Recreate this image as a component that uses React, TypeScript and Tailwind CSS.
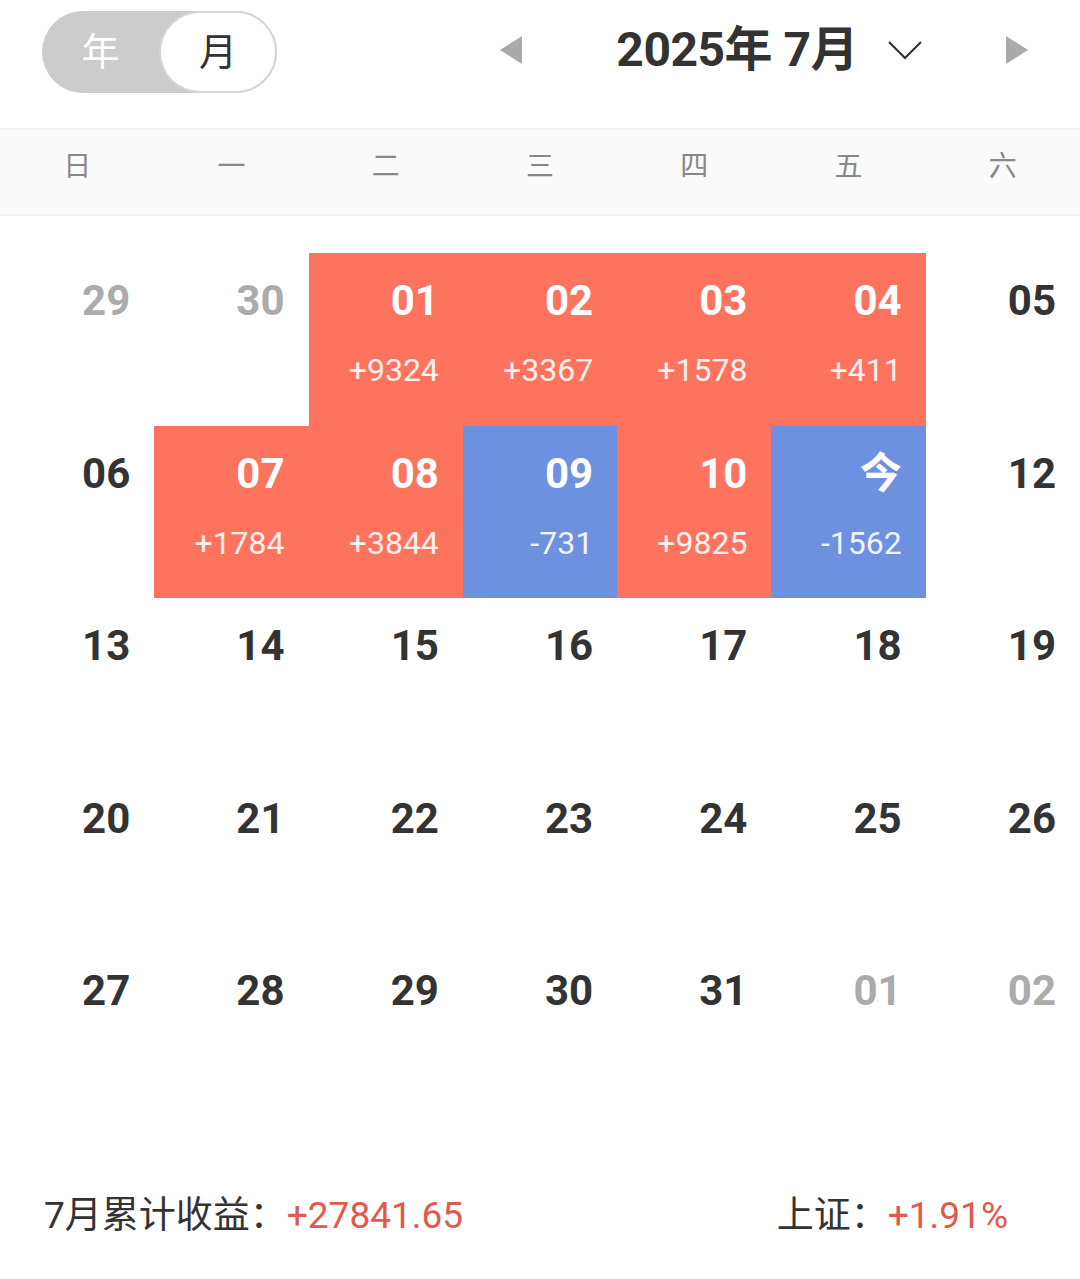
import React from "react";

// Monthly P&L calendar: toggle + month switcher, weekday header,
// grid of days (red = gain, blue = loss), and a summary footer.

type Day = {
  label: string;
  muted?: boolean;
  amount?: string;
  tone?: "up" | "down";
};

const WEEKDAYS = ["日", "一", "二", "三", "四", "五", "六"];

const DAYS: Day[] = [
  { label: "29", muted: true },
  { label: "30", muted: true },
  { label: "01", amount: "+9324", tone: "up" },
  { label: "02", amount: "+3367", tone: "up" },
  { label: "03", amount: "+1578", tone: "up" },
  { label: "04", amount: "+411", tone: "up" },
  { label: "05" },
  { label: "06" },
  { label: "07", amount: "+1784", tone: "up" },
  { label: "08", amount: "+3844", tone: "up" },
  { label: "09", amount: "-731", tone: "down" },
  { label: "10", amount: "+9825", tone: "up" },
  { label: "今", amount: "-1562", tone: "down" },
  { label: "12" },
  ...["13", "14", "15", "16", "17", "18", "19"].map((label) => ({ label })),
  ...["20", "21", "22", "23", "24", "25", "26"].map((label) => ({ label })),
  ...["27", "28", "29", "30", "31"].map((label) => ({ label })),
  { label: "01", muted: true },
  { label: "02", muted: true },
];

const FONT = "font-['Roboto','Noto_Sans_CJK_SC',sans-serif]";

function DayCell({ day }: { day: Day }) {
  const bg =
    day.tone === "up"
      ? "bg-[#fe735e]"
      : day.tone === "down"
        ? "bg-[#6e90e1]"
        : "bg-white";
  const numColor = day.tone
    ? "text-white"
    : day.muted
      ? "text-[#ababab]"
      : "text-[#333333]";

  return (
    <div className={`${bg} flex flex-col items-end pr-[24px] pt-[27px]`}>
      <span className={`text-[42px] leading-none font-bold ${numColor}`}>
        {day.label}
      </span>
      {day.amount && (
        <span className="mt-[32px] text-[32px] leading-none text-white/90">
          {day.amount}
        </span>
      )}
    </div>
  );
}

export default function App() {
  return (
    <div className={`w-[1080px] h-[1279px] bg-white ${FONT}`}>
      {/* Header */}
      <div className="h-[128px] flex items-start pt-[11px] pl-[42px] pr-[52px]">
        <div className="w-[235px] h-[82px] rounded-full bg-[#cccccc] flex items-center">
          <div className="flex-1 text-center text-[38px] text-white leading-none">
            年
          </div>
          <div className="w-[118px] h-[82px] rounded-full bg-white border-2 border-[#d6d6d6] flex items-center justify-center text-[38px] text-[#333333] leading-none">
            月
          </div>
        </div>

        <div className="ml-auto h-[78px] flex items-center">
          <svg width="22" height="28" viewBox="0 0 22 28">
            <polygon points="22,0 0,14 22,28" fill="#aaaaaa" />
          </svg>
          <div className="ml-[94px] text-[48px] font-bold text-[#333333] leading-none tracking-[-0.5px]">
            2025年 7月
          </div>
          <svg
            className="ml-[30px]"
            width="34"
            height="22"
            viewBox="0 0 34 22"
          >
            <polyline
              points="1,3 17,19 33,3"
              fill="none"
              stroke="#333333"
              strokeWidth="2.2"
            />
          </svg>
          <svg className="ml-[84px]" width="22" height="28" viewBox="0 0 22 28">
            <polygon points="0,0 22,14 0,28" fill="#aaaaaa" />
          </svg>
        </div>
      </div>

      {/* Weekdays */}
      <div className="h-[88px] grid grid-cols-7 items-center pb-[16px] bg-[#fafafa] border-y-2 border-[#f1f1f1]">
        {WEEKDAYS.map((w) => (
          <div
            key={w}
            className="text-center text-[28px] leading-none text-[#888888] font-['Noto_Sans_CJK_SC',sans-serif]"
          >
            {w}
          </div>
        ))}
      </div>

      {/* Calendar grid */}
      <div className="mt-[37px] grid grid-cols-7 auto-rows-[172.6px]">
        {DAYS.map((d, i) => (
          <DayCell key={i} day={d} />
        ))}
      </div>

      {/* Footer summary */}
      <div className="mt-[72px] h-[56px] flex items-center justify-between pl-[44px] pr-[72px] text-[37px] leading-none">
        <div>
          <span className="text-[#333333]">7月累计收益：</span>
          <span className="text-[#e05a4b]">+27841.65</span>
        </div>
        <div>
          <span className="text-[#333333]">上证：</span>
          <span className="text-[#e05a4b]">+1.91%</span>
        </div>
      </div>
    </div>
  );
}
